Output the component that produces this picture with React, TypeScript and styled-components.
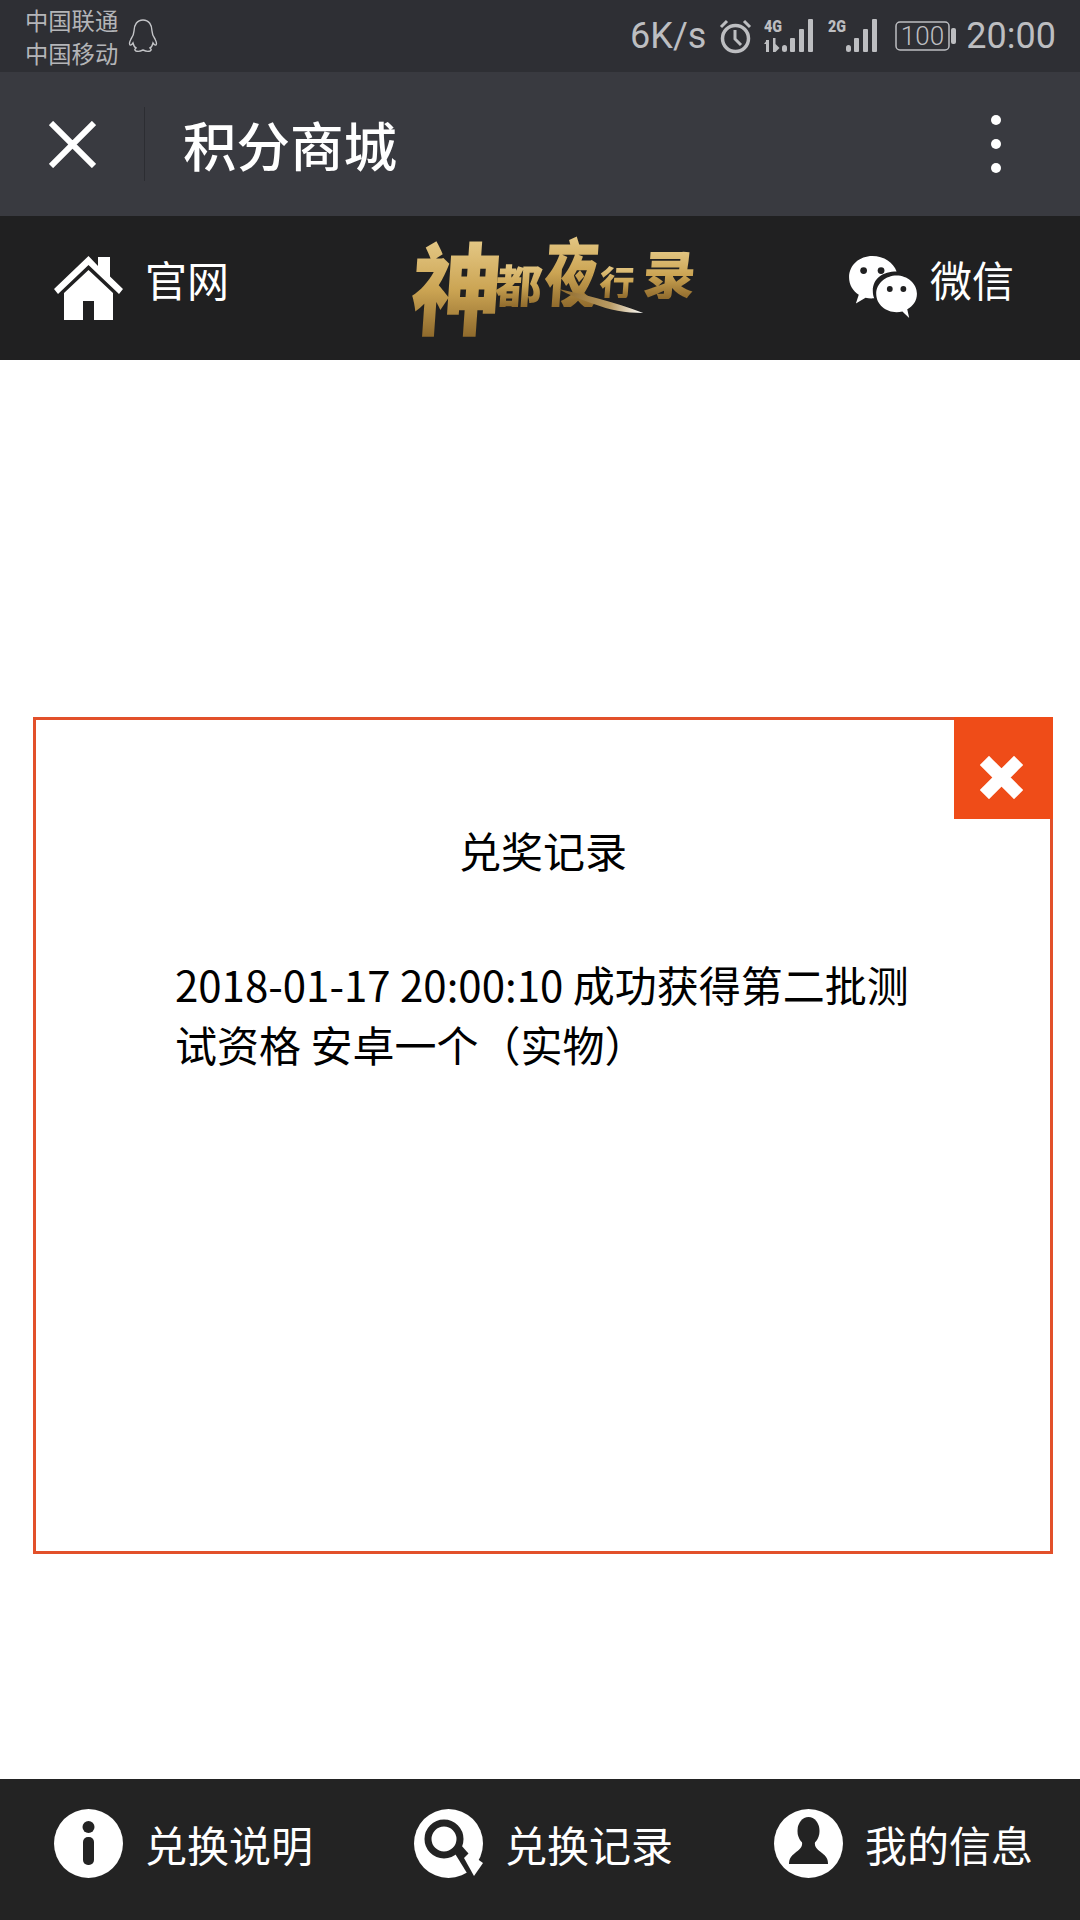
import styled, { createGlobalStyle } from "styled-components";

const CJK = `"Noto Sans CJK SC", "Noto Sans", sans-serif`;

const GlobalStyle = createGlobalStyle`
  html, body {
    margin: 0;
    padding: 0;
    background: #fff;
  }
  * {
    box-sizing: border-box;
  }
`;

const Page = styled.div`
  width: 1080px;
  height: 1920px;
  display: flex;
  flex-direction: column;
  overflow: hidden;
  font-family: ${CJK};
  background: #fff;
`;

const StatusBar = styled.div`
  height: 72px;
  flex: none;
  display: flex;
  align-items: center;
  padding: 0 24px 0 25px;
  background: #2e2f34;
  color: #bdbec1;
`;

const Carriers = styled.div`
  display: flex;
  flex-direction: column;
  font-size: 23.3px;
  line-height: 33px;
  width: 103px;
  margin-top: 1px;
  color: #b4b5b8;
`;

const StatusRight = styled.div`
  margin-left: auto;
  display: flex;
  align-items: center;
`;

const StatusText = styled.span<{ $left?: number }>`
  font-family: Roboto, "Liberation Sans", sans-serif;
  font-size: 36px;
  line-height: 72px;
  margin-left: ${(props) => props.$left ?? 0}px;
`;

const StatusIcon = styled.svg<{ $left: number }>`
  display: block;
  margin-left: ${(props) => props.$left}px;
  flex: none;
`;

const TitleBar = styled.div`
  height: 144px;
  flex: none;
  display: flex;
  align-items: center;
  padding-left: 49px;
  background: #393a40;
`;

const Divider = styled.div`
  width: 1px;
  height: 74px;
  margin-left: 48px;
  background: #2c2d32;
`;

const PageTitle = styled.div`
  margin-left: 38px;
  font-size: 53.5px;
  line-height: 72px;
  font-weight: 500;
  color: #fff;
`;

const MoreDots = styled.div`
  margin-left: auto;
  margin-right: 79px;
  display: flex;
  flex-direction: column;
  gap: 14px;
`;

const Dot = styled.span`
  display: block;
  width: 10px;
  height: 10px;
  border-radius: 50%;
  background: #fff;
`;

const Header = styled.div`
  height: 144px;
  flex: none;
  display: flex;
  align-items: center;
  padding: 0 66px 0 54px;
  background: #202021;
`;

const NavItem = styled.div<{ $gap: number }>`
  display: flex;
  align-items: center;
  gap: ${(props) => props.$gap}px;
  font-size: 42px;
  line-height: 60px;
  color: #fff;
`;

const HeaderLabel = styled.span`
  margin-top: -18px;
`;

const Logo = styled.div`
  position: relative;
  width: 283px;
  height: 110px;
  margin-left: 183px;
  margin-right: auto;
  display: flex;
  align-items: center;
  transform: skewX(-4deg);
`;

const LogoChar = styled.span<{ $size: number; $shift: number; $gap: number; $sx?: number; $sy?: number }>`
  font-size: ${(props) => props.$size}px;
  line-height: 1;
  font-weight: 900;
  margin-left: ${(props) => props.$gap}px;
  transform: translateY(${(props) => props.$shift}px) scale(${(props) => props.$sx ?? 1}, ${(props) => props.$sy ?? 1});
  background: linear-gradient(180deg, #e8cd8c 0%, #cba453 55%, #8f6a2c 100%);
  -webkit-background-clip: text;
  background-clip: text;
  color: transparent;
`;

const LogoStroke = styled.svg`
  position: absolute;
  left: 147px;
  top: 54px;
`;

const Main = styled.main`
  flex: 1;
  padding: 357px 27px 0 33px;
`;

const Modal = styled.section`
  position: relative;
  height: 837px;
  border: 3px solid #e2502a;
  padding-top: 100px;
  color: #000;
`;

const CloseButton = styled.div`
  position: absolute;
  top: -3px;
  right: -3px;
  width: 99px;
  height: 102px;
  padding: 18px 4px 0 0;
  display: flex;
  align-items: center;
  justify-content: center;
  background: #ef4c18;
`;

const ModalTitle = styled.h2`
  margin: 0;
  text-align: center;
  font-size: 42px;
  line-height: 60px;
  font-weight: 400;
`;

const Record = styled.p`
  margin: 74px 110px 0 139px;
  font-size: 42px;
  line-height: 60px;
  font-weight: 400;
`;

const Footer = styled.div`
  height: 141px;
  flex: none;
  display: grid;
  grid-template-columns: repeat(3, 360px);
  align-items: center;
  padding: 0 0 12px 54px;
  background: #232323;
`;

function AlarmIcon() {
  return (
    <StatusIcon $left={13} width="33" height="35" viewBox="0 0 33 35" fill="none" stroke="#bdbec1">
      <circle cx="16.5" cy="19.5" r="13" strokeWidth="3.5" />
      <path d="M16 11v9l6 6" strokeWidth="3" />
      <path d="M2 8l6-6M31 8l-6-6" strokeWidth="3" />
    </StatusIcon>
  );
}

function SignalBars({ network, arrows, left }: { network: string; arrows?: boolean; left: number }) {
  return (
    <StatusIcon $left={left} width="52" height="44" viewBox="0 -4 52 44" fill="#bdbec1">
      <text x="0" y="14" fontFamily="Roboto, sans-serif" fontSize="17" fontWeight="900" textLength="18" lengthAdjust="spacingAndGlyphs">
        {network}
      </text>
      {arrows && <path d="M2 22h3v12H2zM0 26l3-4v4zM9 20h2.500v14H9zM11.500 26l4 4-4 4z" />}
      <rect x="18" y="27" width="5" height="7" rx="2.500" />
      <rect x="26" y="20" width="5" height="14" rx="1" />
      <rect x="35" y="11" width="5" height="23" rx="1" />
      <rect x="44" y="1" width="5" height="33" rx="1" />
    </StatusIcon>
  );
}

function BatteryIcon() {
  return (
    <StatusIcon $left={15} width="62" height="30" viewBox="0 0 62 30" fill="none">
      <rect x="1" y="1" width="53" height="28" rx="4" stroke="#bdbec1" strokeWidth="1.500" />
      <text x="27.500" y="24" textAnchor="middle" fill="#bdbec1" fontFamily="Roboto, sans-serif" fontSize="26" fontWeight="300">
        100
      </text>
      <rect x="56" y="7" width="5" height="16" rx="2" fill="#bdbec1" />
    </StatusIcon>
  );
}

function QQIcon() {
  return (
    <svg width="30" height="35" viewBox="0 0 30 35" fill="none" stroke="#c4c5c8" strokeWidth="1.400">
      <path d="M15 1c-6 0-9 5-9 11 0 3-1 5-3 8-1 2-2 5-1 6 1 .6 2-.5 3-2 .5 2 1 4 3 5-1 1-2 2 0 3 3 1 5 0 7-1 2 1 4 2 7 1 2-1 1-2 0-3 2-1 2.500-3 3-5 1 1.500 2 2.600 3 2 1-1 0-4-1-6-2-3-3-5-3-8 0-6-3-11-9-11z" />
    </svg>
  );
}

function HomeIcon() {
  return (
    <svg width="69" height="64" viewBox="0 0 69 64" fill="#fff">
      <path d="M34.500 0L0 33l4 5 30.500-29L65 38l4-5-13-12.500V1H44v9z" />
      <path d="M34.500 14L10 37v27h19V45h11v19h19V37z" />
    </svg>
  );
}

function WechatIcon() {
  return (
    <svg width="70" height="64" viewBox="0 0 70 66" fill="#fff">
      <path d="M24 0C11 0 0 9 0 22c0 8 4 14 10 18l-3 9 10-6c2 .5 4 .7 6 .7 1 0 2 0 3-.1-1-2-1.500-5-1.500-7.600C24.500 23 35 16 49 16c-3-9-13-16-25-16z" />
      <path d="M49 20c-11 0-21 8-21 19s10 19 21 19c2 0 4-.3 6-.8L62 64l-2-9c6-3 10-9 10-16 0-11-10-19-21-19z" />
      <circle cx="15" cy="15" r="3.500" fill="#202021" />
      <circle cx="33" cy="15" r="3.500" fill="#202021" />
      <circle cx="42" cy="34" r="3" fill="#202021" />
      <circle cx="56" cy="34" r="3" fill="#202021" />
    </svg>
  );
}

function InfoIcon() {
  return (
    <svg width="69" height="69" viewBox="0 0 69 69">
      <circle cx="34.500" cy="34.500" r="34.500" fill="#fff" />
      <circle cx="34.500" cy="18" r="6" fill="#232323" />
      <rect x="29" y="28" width="11" height="28" rx="5" fill="#232323" />
    </svg>
  );
}

function SearchIcon() {
  return (
    <svg width="69" height="69" viewBox="0 0 69 69">
      <circle cx="34.500" cy="34.500" r="34.500" fill="#fff" />
      <circle cx="30" cy="30" r="16" fill="#fff" stroke="#232323" strokeWidth="7" />
      <path d="M40 43l7-7 22 25-13 8z" fill="#232323" />
      <path d="M50 49l5-5 14 10-9 13z" fill="#fff" />
    </svg>
  );
}

function UserIcon() {
  return (
    <svg width="69" height="69" viewBox="0 0 69 69">
      <circle cx="34.500" cy="34.500" r="34.500" fill="#fff" />
      <ellipse cx="34.500" cy="22" rx="11" ry="14" fill="#232323" />
      <path d="M28 33c1 5-3 8-7 11-4 3-6 6-6 11h39c0-5-2-8-6-11-4-3-8-6-7-11z" fill="#232323" />
    </svg>
  );
}

export default function App() {
  return (
    <>
      <GlobalStyle />
      <Page>
        <StatusBar>
          <Carriers>
            <span>中国联通</span>
            <span>中国移动</span>
          </Carriers>
          <QQIcon />
          <StatusRight>
            <StatusText>6K/s</StatusText>
            <AlarmIcon />
            <SignalBars network="4G" arrows left={12} />
            <SignalBars network="2G" left={12} />
            <BatteryIcon />
            <StatusText $left={9}>20:00</StatusText>
          </StatusRight>
        </StatusBar>

        <TitleBar>
          <svg width="47" height="47" viewBox="0 0 47 47" stroke="#fff" strokeWidth="6">
            <path d="M2 2l43 43M45 2L2 45" />
          </svg>
          <Divider />
          <PageTitle>积分商城</PageTitle>
          <MoreDots>
            <Dot />
            <Dot />
            <Dot />
          </MoreDots>
        </TitleBar>

        <Header>
          <NavItem $gap={22}>
            <HomeIcon />
            <HeaderLabel>官网</HeaderLabel>
          </NavItem>
          <Logo>
            <LogoChar $size={90} $shift={-3} $gap={0} $sy={1.15}>神</LogoChar>
            <LogoChar $size={47} $shift={-5} $gap={-7}>都</LogoChar>
            <LogoChar $size={64} $shift={-19} $gap={-3} $sx={0.85} $sy={1.2}>夜</LogoChar>
            <LogoChar $size={35} $shift={-8} $gap={-4}>行</LogoChar>
            <LogoChar $size={53} $shift={-16} $gap={8}>录</LogoChar>
            <LogoStroke width="88" height="28" viewBox="0 0 88 28">
              <defs>
                <linearGradient id="logoStroke" x1="0" x2="1" y1="0" y2="0">
                  <stop offset="0" stopColor="#8f6a2c" />
                  <stop offset="0.6" stopColor="#b89a62" />
                  <stop offset="1" stopColor="#ffffff" />
                </linearGradient>
              </defs>
              <path d="M0 2c26 6 54 12 86 24-18 0-34-3-50-9C22 12 10 8 0 2z" fill="url(#logoStroke)" />
            </LogoStroke>
          </Logo>
          <NavItem $gap={12}>
            <WechatIcon />
            <HeaderLabel>微信</HeaderLabel>
          </NavItem>
        </Header>

        <Main>
          <Modal>
            <CloseButton>
              <svg width="43" height="43" viewBox="0 0 43 43" stroke="#fff" strokeWidth="13" strokeLinecap="square">
                <path d="M9 9l25 25M34 9L9 34" />
              </svg>
            </CloseButton>
            <ModalTitle>兑奖记录</ModalTitle>
            <Record>2018-01-17 20:00:10 成功获得第二批测试资格 安卓一个（实物）</Record>
          </Modal>
        </Main>

        <Footer>
          <NavItem $gap={22}>
            <InfoIcon />
            兑换说明
          </NavItem>
          <NavItem $gap={22}>
            <SearchIcon />
            兑换记录
          </NavItem>
          <NavItem $gap={22}>
            <UserIcon />
            我的信息
          </NavItem>
        </Footer>
      </Page>
    </>
  );
}
